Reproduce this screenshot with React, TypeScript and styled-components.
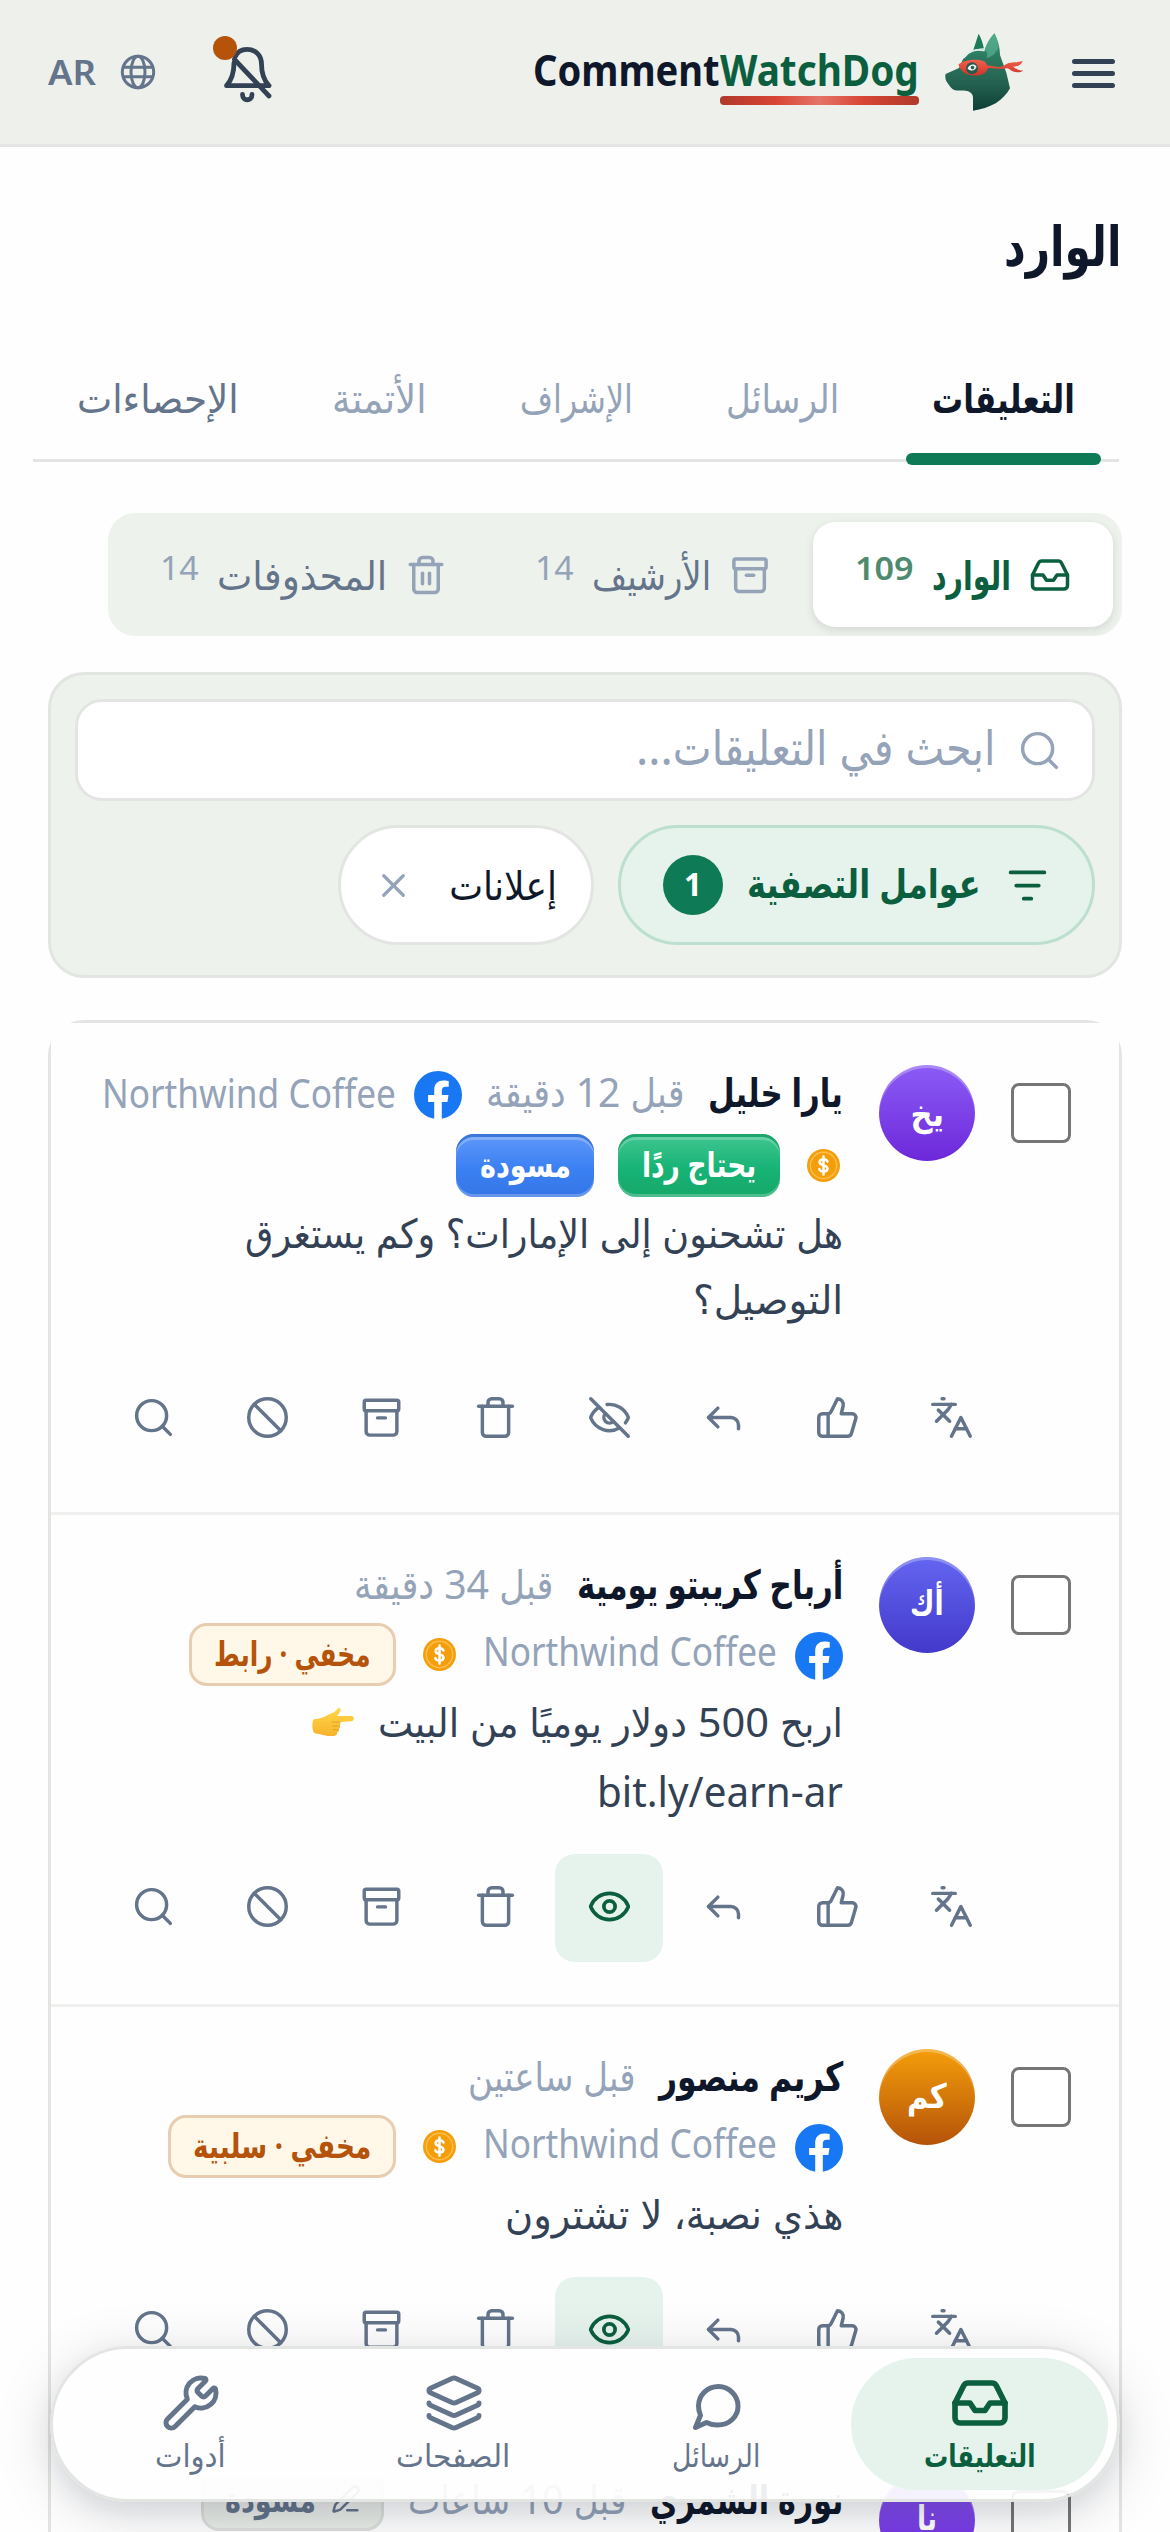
import React, { useLayoutEffect, useRef, useState } from "react";
import styled, { createGlobalStyle, css } from "styled-components";
import {
  Ban,
  Eye,
  EyeOff,
  Inbox,
  Languages,
  Layers,
  PenLine,
  Reply,
  Search,
  ThumbsUp,
  Trash,
  Trash2,
  Wrench,
  X,
} from "lucide-react";

const c = {
  ink: "#0f172a",
  body: "#334155",
  slate: "#64748b",
  mute: "#94a3b8",
  green: "#0f7b56",
  deep: "#0b5f3f",
  mint: "#e6f3ed",
  panel: "#eef2ec",
  line: "#e3e5e2",
  amber: "#b45309",
};

const Global = createGlobalStyle`
  *, *::before, *::after { box-sizing: border-box; }
  body { margin: 0; background: #fefefe; }
  svg { display: block; flex: none; }
`;

const Screen = styled.div`
  direction: rtl;
  position: relative;
  width: 1170px;
  height: 2532px;
  overflow: hidden;
  background: #fefefe;
  color: ${c.ink};
  font-family: "Noto Sans", "DejaVu Sans Condensed", "DejaVu Sans", sans-serif;
`;

/* ---------- text that fills a given measure ---------- */

const Measure = styled.span<{ $w: number; $size: number; $weight: number; $color: string; $lift: number; $ltr?: boolean; $lh: number }>`
  display: block;
  flex: none;
  width: ${(p) => p.$w}px;
  height: ${(p) => p.$lh}px;
  line-height: ${(p) => p.$lh}px;
  margin-bottom: ${(p) => p.$lift * 2}px;
  font-size: ${(p) => p.$size}px;
  font-weight: ${(p) => p.$weight};
  color: ${(p) => p.$color};
  white-space: nowrap;
  direction: ${(p) => (p.$ltr ? "ltr" : "rtl")};
`;

const Run = styled.span<{ $ltr?: boolean }>`
  display: inline-block;
  transform-origin: ${(p) => (p.$ltr ? "left" : "right")} center;
`;

type TextProps = {
  children: React.ReactNode;
  w: number;
  size?: number;
  weight?: number;
  color?: string;
  lift?: number;
  lh?: number;
  ltr?: boolean;
};

function Text({ children, w, size = 40, weight = 400, color = c.ink, lift = 0, lh = 54, ltr }: TextProps) {
  const ref = useRef<HTMLSpanElement>(null);
  const [k, setK] = useState(1);
  useLayoutEffect(() => {
    if (ref.current) setK(w / ref.current.offsetWidth);
  }, [w, size]);
  return (
    <Measure $w={w} $size={size} $weight={weight} $color={color} $lift={lift} $lh={lh} $ltr={ltr}>
      <Run ref={ref} $ltr={ltr} style={{ transform: `scaleX(${k})` }}>
        {children}
      </Run>
    </Measure>
  );
}

/* ---------- header ---------- */

const Header = styled.header`
  display: flex;
  align-items: center;
  height: 147px;
  padding: 0 48px;
  background: #edf0eb;
  border-bottom: 3px solid ${c.line};
`;

const Brand = styled.div`
  display: flex;
  align-items: center;
  gap: 26px;
  margin-right: 42px;
`;

const Wordmark = styled.div`
  display: flex;
  direction: ltr;
  align-items: flex-start;
  height: 72px;
  padding-top: 4px;
`;

const Accent = styled.div`
  display: flex;
  flex-direction: column;
`;

const Underline = styled.i`
  height: 9px;
  margin-top: -4px;
  border-radius: 4px;
  background: linear-gradient(90deg, #b0382a 0%, #d84534 28%, #e57468 50%, #d84534 72%, #b0382a 100%);
`;

const Tools = styled.div`
  display: flex;
  align-items: center;
  margin-right: auto;
`;

const Locale = styled.div`
  display: flex;
  align-items: center;
  gap: 24px;
  margin-right: 57px;
`;

const MenuIcon = () => (
  <svg width="57" height="48" viewBox="0 0 57 48" stroke={c.body} strokeWidth="5" strokeLinecap="round">
    <path d="M9.5 13.500h38M9.500 25.500h38M9.500 37.500h38" />
  </svg>
);

const DogLogo = () => (
  <svg width="78" height="78" viewBox="0 0 78 78">
    <defs>
      <linearGradient id="coat" x1="0" y1="0" x2="0" y2="1">
        <stop offset="0" stopColor="#3f9c7c" />
        <stop offset="0.3" stopColor="#2b7a60" />
        <stop offset="0.65" stopColor="#24614f" />
        <stop offset="1" stopColor="#0b3f35" />
      </linearGradient>
      <linearGradient id="band" x1="0" y1="0" x2="0" y2="1">
        <stop offset="0" stopColor="#f0604d" />
        <stop offset="1" stopColor="#cf3527" />
      </linearGradient>
    </defs>
    <path d="M33.600 .7 28 18c3-1.800 7-2.800 10.800-2.700C38 10 36 5 33.600.7z" fill="#1d7a58" />
    <path
      d="M49.400.3C45 5 41.500 11 39.600 17c-8-1.500-17 1.500-21 8.300-2 3.500-3 7-4.600 9.700L.6 41c-.8 3 0 6 1.600 8.400 2 2.600 4 6.600 8 7.900 4 1 9-.8 13 .9 3.500 1.500 4.800 3.500 4.800 6.500v13c8-1.200 16-3.700 22.700-7.400C57 66 62 61 65 55.300L61.400 40 55 22C55 14 52.500 6 49.400.3z"
      fill="url(#coat)"
    />
    <path d="M49.400.3C45 5 41.500 11 39.600 17c3 2 3 4 2 8 5-1 10-5 12-11C52.700 9 51.500 4 49.400.3z" fill="#5bb394" opacity=".65" />
    <path d="M19 24.500c4-6 12-9 20-7" fill="none" stroke="#dff2ea" strokeWidth="1.600" strokeLinecap="round" />
    <path
      d="M13.400 31.500c5-4.500 17-6 25-3.500 2 .8 3 2.600 4 4.500l11.600 1.500c2-.8 4-.3 5-1.200 5-5 11-2.500 18.700-4.800-1 3.500-5 6-10 5.600 3 2 6 4 10.500 3.900-4 3-10 2-14-1.500-1.500-1.300-4-1-6 0L43 35c-1.500 5-6 7.600-12.500 7.600C23 42.600 16 40 13.400 31.500z"
      fill="url(#band)"
    />
    <circle cx="27" cy="35.300" r="6" fill="#2a5a4c" />
    <path d="M22.500 35.500c2-4.500 7-5 9-2-.5 3.500-5 6-9 2z" fill="#f4faf7" />
    <circle cx="27.500" cy="34.600" r="1.800" fill="#2a5a4c" />
  </svg>
);

const BellIcon = () => (
  <svg width="60" height="78" viewBox="213 33 60 78" fill="none" strokeLinecap="round" strokeLinejoin="round">
    <g stroke={c.body} strokeWidth="4.800">
      <path d="M235 57c2-4.800 6.500-7.700 12-7.700 9 0 14.500 6.500 14.500 14.700 0 10 2.500 16.500 7.500 21.700h-42.500c5-5.500 7.500-13 7.500-22.700" />
      <path d="M234.500 59.500 269 96" />
      <path d="M242.500 94.500c0 7 9.500 7 9.500 0" />
    </g>
    <circle cx="225" cy="48" r="12" fill={c.amber} />
  </svg>
);

const GlobeIcon = () => (
  <svg width="36" height="36" viewBox="0 0 36 36" fill="none" stroke="#64748b" strokeWidth="3">
    <circle cx="18" cy="18" r="15.700" />
    <ellipse cx="18" cy="18" rx="7" ry="15.700" />
    <path d="M3.500 13.300h29M3.500 22.700h29" />
  </svg>
);

/* ---------- title and tabs ---------- */

const TitleRow = styled.div`
  display: flex;
  height: 176px;
  padding: 58px 49px 0;
`;

const Tabs = styled.nav`
  display: flex;
  height: 139px;
  margin: 0 51px 0 33px;
  padding: 48px 18px 0 0;
  border-bottom: 3px solid ${c.line};
`;

const Tab = styled.div<{ $active?: boolean }>`
  display: flex;
  flex: none;
  flex-direction: column;
  align-items: stretch;
  height: 94px;
  padding: 0 26px;
  margin-left: 41px;
  &:last-child {
    margin-left: 0;
  }
  ${(p) =>
    p.$active &&
    css`
      &::after {
        content: "";
        flex: none;
        height: 12px;
        margin: 28px -26px 0;
        border-radius: 6px;
        background: ${c.green};
      }
    `}
`;

/* ---------- folder switch ---------- */

const Folders = styled.div`
  display: flex;
  width: 1014px;
  height: 123px;
  margin: 51px 48px 0 0;
  padding: 9px;
  border-radius: 27px;
  background: ${c.panel};
`;

const Folder = styled.div<{ $w: number; $pr: number; $active?: boolean }>`
  display: flex;
  flex: none;
  align-items: center;
  gap: 18px;
  width: ${(p) => p.$w}px;
  padding-right: ${(p) => p.$pr}px;
  border-radius: 22px;
  ${(p) =>
    p.$active &&
    css`
      background: #fff;
      box-shadow: 0 3px 8px rgba(15, 23, 42, 0.12);
    `}
`;

const ArchiveIcon = ({ size, sw = 1.85 }: { size: number; sw?: number }) => (
  <svg width={size} height={size} viewBox="0 0 24 24" fill="none" stroke="currentColor" strokeWidth={sw} strokeLinecap="round" strokeLinejoin="round">
    <rect x="2.800" y="2.800" width="18.400" height="5.600" rx="1" />
    <path d="M3.800 8.400v11a2 2 0 0 0 2 2h12.400a2 2 0 0 0 2-2v-11" />
    <path d="M9.900 12.200h4.200" />
  </svg>
);

const Tint = styled.span<{ $c: string }>`
  display: flex;
  color: ${(p) => p.$c};
`;

/* ---------- filter panel ---------- */

const Filters = styled.section`
  display: flex;
  flex-direction: column;
  gap: 24px;
  height: 306px;
  margin: 36px 48px 0;
  padding: 24px;
  border: 3px solid ${c.line};
  border-radius: 36px;
  background: #edf2ec;
`;

const SearchField = styled.div`
  display: flex;
  align-items: center;
  gap: 22px;
  height: 102px;
  padding-right: 30px;
  border: 3px solid ${c.line};
  border-radius: 27px;
  background: #fff;
`;

const Chips = styled.div`
  display: flex;
  gap: 24px;
`;

const Chip = styled.div<{ $w: number; $pr: number; $gap: number; $active?: boolean }>`
  display: flex;
  flex: none;
  align-items: center;
  gap: ${(p) => p.$gap}px;
  width: ${(p) => p.$w}px;
  height: 120px;
  padding-right: ${(p) => p.$pr}px;
  border: 3px solid ${(p) => (p.$active ? "#bcdfd0" : c.line)};
  border-radius: 60px;
  background: ${(p) => (p.$active ? c.mint : "#fff")};
`;

const Count = styled.span`
  display: flex;
  align-items: center;
  justify-content: center;
  width: 60px;
  height: 60px;
  border-radius: 50%;
  background: ${c.green};
`;

const FilterIcon = () => (
  <svg width="45" height="45" viewBox="0 0 24 24" stroke={c.deep} strokeWidth="2" strokeLinecap="round">
    <path d="M3 5h18M6 12h12M10 19h4" />
  </svg>
);

/* ---------- comment list ---------- */

const List = styled.section`
  margin: 42px 48px 0;
  border: 3px solid ${c.line};
  border-radius: 36px 36px 0 0;
`;

const Item = styled.article<{ $h: number }>`
  height: ${(p) => p.$h}px;
  padding: 42px 48px 0;
  border-bottom: 3px solid #efefed;
  background: #fefefe;
`;

const Head = styled.div`
  display: flex;
  gap: 36px;
`;

const Checkbox = styled.span`
  flex: none;
  width: 60px;
  height: 60px;
  margin-top: 18px;
  border: 3px solid #767676;
  border-radius: 8px;
  background: #fff;
`;

const Avatar = styled.span<{ $from: string; $to: string }>`
  display: flex;
  flex: none;
  align-items: center;
  justify-content: center;
  width: 96px;
  height: 96px;
  border-radius: 50%;
  background: linear-gradient(${(p) => p.$from}, ${(p) => p.$to});
  box-shadow: inset 0 3px 0 rgba(255, 255, 255, 0.28);
`;

const Content = styled.div`
  flex: 1;
  min-width: 0;
`;

const Meta = styled.div<{ $h: number; $mt?: number }>`
  display: flex;
  align-items: center;
  gap: 24px;
  height: ${(p) => p.$h}px;
  margin-top: ${(p) => p.$mt ?? 0}px;
`;

const Source = styled.div`
  display: flex;
  align-items: center;
  gap: 18px;
`;

const FbBox = styled.span<{ $drop: number }>`
  margin-top: ${(p) => p.$drop}px;
`;

const CoinBox = styled.span`
  padding: 0 3px;
`;

const pillTone = {
  green: css`
    background: linear-gradient(#41c78f, #17b376 55%, #16a869);
    box-shadow: inset 0 3px 0 #1ea56c, inset 0 6px 0 rgba(255, 255, 255, 0.22), inset 0 -3px 0 rgba(255, 255, 255, 0.24);
  `,
  blue: css`
    background: linear-gradient(#6098fa, #3b80f3 55%, #3576e6);
    box-shadow: inset 0 3px 0 #3b76d8, inset 0 6px 0 rgba(255, 255, 255, 0.25), inset 0 -3px 0 rgba(255, 255, 255, 0.24);
  `,
  warn: css`
    background: #fff7e8;
    border: 3px solid #e9cdb0;
  `,
  plain: css`
    background: #e9ece7;
    border: 3px solid #dcdfda;
  `,
};

const Pill = styled.span<{ $tone: keyof typeof pillTone; $w: number }>`
  display: flex;
  flex: none;
  align-items: center;
  justify-content: center;
  gap: 15px;
  width: ${(p) => p.$w}px;
  height: 63px;
  border-radius: 18px;
  ${(p) => pillTone[p.$tone]}
`;

const Body = styled.div`
  display: flex;
  flex-direction: column;
`;

const BodyLine = styled.div<{ $h: number }>`
  display: flex;
  align-items: flex-start;
  gap: 24px;
  height: ${(p) => p.$h}px;
`;

const EmojiBox = styled.span`
  padding-top: 21px;
`;

const Actions = styled.div<{ $mt: number }>`
  display: flex;
  justify-content: flex-end;
  gap: 6px;
  margin-top: ${(p) => p.$mt}px;
`;

const Action = styled.span<{ $on?: boolean }>`
  display: flex;
  align-items: center;
  justify-content: center;
  width: 108px;
  height: 108px;
  padding-bottom: 3px;
  border-radius: 20px;
  color: ${(p) => (p.$on ? c.deep : c.slate)};
  background: ${(p) => (p.$on ? c.mint : "transparent")};
`;

const Facebook = ({ drop = 3 }: { drop?: number }) => (
  <FbBox $drop={drop}>
    <svg width="48" height="48" viewBox="0 0 24 24">
      <circle cx="12" cy="12" r="12" fill="#1877f2" />
      <path
        d="M10.100 24v-8.500H7.050V12h3.050V9.400c0-3 1.800-4.700 4.550-4.700 1.300 0 2.700.25 2.700.25v2.900h-1.500c-1.500 0-1.950.95-1.950 1.900V12h3.350l-.55 3.500h-2.800V24z"
        fill="#fff"
      />
    </svg>
  </FbBox>
);

const Coin = () => (
  <CoinBox>
    <svg width="33" height="33" viewBox="0 0 33 33" fill="none">
      <circle cx="16.500" cy="16.500" r="16.500" fill="#f59e0b" />
      <circle cx="16.500" cy="16.500" r="13.200" stroke="#fbbf4f" strokeWidth="1.400" />
      <path d="M20.500 12.500c-.7-1.600-2.200-2.300-4-2.300-2.200 0-3.900 1.100-3.900 2.900 0 4.300 7.900 2.200 7.900 6.500 0 1.900-1.800 3-4 3-2 0-3.600-.8-4.200-2.500M16.500 7.500v18" stroke="#fff" strokeWidth="2.500" strokeLinecap="round" />
    </svg>
  </CoinBox>
);

const PointRight = () => (
  <EmojiBox>
    <svg width="42" height="30" viewBox="0 0 42 30">
      <defs>
        <linearGradient id="skin" x1="0" y1="0" x2="0" y2="1">
          <stop offset="0" stopColor="#ffd84a" />
          <stop offset="1" stopColor="#f7b32b" />
        </linearGradient>
      </defs>
      <path
        d="M1 13c1.500-1.200 4-1 6-1.500C13 10 17 7 21.500 5.500c2-.8 3.500-3.500 5-4.400 1.500-.8 3 .8 2 2.700-.9 1.800-2 3.700-3.500 5.200h14.500c3 0 3 5.200 0 5.200L28 15c1 1.500.6 3-.5 3.700.8 1.300.4 2.700-.8 3.400.5 1.500 0 2.800-1.400 3.300C25 28 23 29 21 29c-6 0-8 0-12-1.500-2-.7-5-.5-7-1.500-2-3.500-2-9-1-13z"
        fill="url(#skin)"
      />
      <path d="M20 15h8M21 19h6.500M21 22.700h5.500" stroke="#e3a024" strokeWidth="1" strokeLinecap="round" fill="none" />
    </svg>
  </EmojiBox>
);

const iconProps = { size: 45, strokeWidth: 1.85 };

function ActionBar({ mt, hidden }: { mt: number; hidden?: boolean }) {
  return (
    <Actions $mt={mt}>
      <Action><Languages {...iconProps} /></Action>
      <Action><ThumbsUp {...iconProps} /></Action>
      <Action><Reply {...iconProps} /></Action>
      <Action $on={hidden}>{hidden ? <Eye {...iconProps} strokeWidth={2} /> : <EyeOff {...iconProps} />}</Action>
      <Action><Trash {...iconProps} /></Action>
      <Action><ArchiveIcon size={45} /></Action>
      <Action><Ban {...iconProps} /></Action>
      <Action><Search {...iconProps} /></Action>
    </Actions>
  );
}

const PageName = ({ lift = 0 }: { lift?: number }) => (
  <Text w={294} size={40} color={c.mute} ltr lift={lift}>
    Northwind Coffee
  </Text>
);

/* ---------- bottom navigation ---------- */

const Dock = styled.nav`
  position: absolute;
  left: 50px;
  top: 2346px;
  display: grid;
  grid-template-columns: repeat(4, 1fr);
  gap: 6px;
  width: 1070px;
  height: 156px;
  padding: 9px;
  border: 3px solid ${c.line};
  border-radius: 78px;
  background: linear-gradient(#fefefe 84%, rgba(254, 254, 254, 0.93) 88%);
  background-clip: padding-box;
  box-shadow: 0 12px 60px rgba(15, 23, 42, 0.14), 0 10px 24px rgba(15, 23, 42, 0.08);
`;

const DockItem = styled.div<{ $active?: boolean }>`
  display: flex;
  flex-direction: column;
  align-items: center;
  padding-top: 15px;
  border-radius: 66px;
  color: ${(p) => (p.$active ? c.deep : c.slate)};
  background: ${(p) => (p.$active ? c.mint : "transparent")};
`;

const BubbleIcon = () => (
  <svg width="60" height="60" viewBox="0 0 60 60" fill="none" stroke="currentColor" strokeWidth="5" strokeLinejoin="round">
    <path d="M19.500 49.500c3.500 1.800 7 2.500 11 2.500 12 0 20.500-8.500 20.500-18.800S42.500 13.500 31.500 13.500 11.500 22 11.500 33c0 4 .8 6.700 2 9.300L8.500 54.500z" />
  </svg>
);

export default function App() {
  return (
    <Screen>
      <Global />
      <Header>
        <MenuIcon />
        <Brand>
          <DogLogo />
          <Wordmark>
            <Text w={187} size={43} weight={700} ltr lh={60}>Comment</Text>
            <Accent>
              <Text w={199} size={43} weight={700} color={c.deep} ltr lh={60}>WatchDog</Text>
              <Underline />
            </Accent>
          </Wordmark>
        </Brand>
        <Tools>
          <BellIcon />
          <Locale>
            <GlobeIcon />
            <Text w={48} size={35} weight={600} color={c.slate} ltr>AR</Text>
          </Locale>
        </Tools>
      </Header>

      <TitleRow>
        <Text w={117} size={55} weight={700} lh={80}>الوارد</Text>
      </TitleRow>

      <Tabs>
        <Tab $active><Text w={143} weight={700}>التعليقات</Text></Tab>
        <Tab><Text w={113} color={c.mute}>الرسائل</Text></Tab>
        <Tab><Text w={113} color={c.mute}>الإشراف</Text></Tab>
        <Tab><Text w={95} color={c.mute}>الأتمتة</Text></Tab>
        <Tab><Text w={162} color={c.slate}>الإحصاءات</Text></Tab>
      </Tabs>

      <Folders>
        <Folder $w={300} $pr={42} $active>
          <Tint $c={c.deep}><Inbox size={42} strokeWidth={2} /></Tint>
          <Text w={79} weight={700} color={c.deep}>الوارد</Text>
          <Text w={59} size={33} weight={600} color="#4d8a6e" ltr lift={7}>109</Text>
        </Folder>
        <Folder $w={324} $pr={42}>
          <Tint $c={c.mute}><ArchiveIcon size={42} sw={2} /></Tint>
          <Text w={119} color={c.slate}>الأرشيف</Text>
          <Text w={39} size={33} color={c.mute} ltr lift={7}>14</Text>
        </Folder>
        <Folder $w={360} $pr={42}>
          <Tint $c={c.mute}><Trash2 size={42} strokeWidth={2} /></Tint>
          <Text w={170} color={c.slate}>المحذوفات</Text>
          <Text w={39} size={33} color={c.mute} ltr lift={7}>14</Text>
        </Folder>
      </Folders>

      <Filters>
        <SearchField>
          <Tint $c={c.mute}><Search size={45} strokeWidth={1.85} /></Tint>
          <Text w={360} size={48} color={c.mute} lh={70} lift={3}>ابحث في التعليقات...</Text>
        </SearchField>
        <Chips>
          <Chip $w={477} $pr={42} $gap={24} $active>
            <FilterIcon />
            <Text w={234} weight={700} color={c.deep} lift={2}>عوامل التصفية</Text>
            <Count><Text w={18} size={33} weight={700} color="#fff" lift={1} ltr>1</Text></Count>
          </Chip>
          <Chip $w={256} $pr={34} $gap={36}>
            <Text w={108}>إعلانات</Text>
            <Tint $c={c.mute}><X size={39} strokeWidth={2} /></Tint>
          </Chip>
        </Chips>
      </Filters>

      <List>
        <Item $h={492}>
          <Head>
            <Checkbox />
            <Avatar $from="#8b5cf6" $to="#6d28d9"><Text w={34} size={34} weight={700} color="#fff">يخ</Text></Avatar>
            <Content>
              <Meta $h={54}>
                <Text w={135} weight={700}>يارا خليل</Text>
                <Text w={198} color={c.mute}>قبل 12 دقيقة</Text>
                <Source><Facebook drop={6} /><PageName lift={-1} /></Source>
              </Meta>
              <Meta $h={63} $mt={15}>
                <Coin />
                <Pill $tone="green" $w={162}><Text w={114} size={34} weight={700} color="#fff" lift={2}>يحتاج ردًا</Text></Pill>
                <Pill $tone="blue" $w={138}><Text w={91} size={34} weight={700} color="#fff" lift={2}>مسودة</Text></Pill>
              </Meta>
              <Body>
                <BodyLine $h={66}><Text w={598} color={c.body} lh={72}>هل تشحنون إلى الإمارات؟ وكم يستغرق</Text></BodyLine>
                <BodyLine $h={66}><Text w={150} color={c.body} lh={72}>التوصيل؟</Text></BodyLine>
              </Body>
            </Content>
          </Head>
          <ActionBar mt={36} />
        </Item>

        <Item $h={492}>
          <Head>
            <Checkbox />
            <Avatar $from="#6366f1" $to="#4338ca"><Text w={34} size={34} weight={700} color="#fff" lift={3}>أك</Text></Avatar>
            <Content>
              <Meta $h={54}>
                <Text w={266} weight={700}>أرباح كريبتو يومية</Text>
                <Text w={199} color={c.mute}>قبل 34 دقيقة</Text>
              </Meta>
              <Meta $h={63} $mt={12}>
                <Source><Facebook /><PageName lift={4} /></Source>
                <Coin />
                <Pill $tone="warn" $w={207}><Text w={157} size={34} weight={700} color={c.amber} lift={2}>مخفي · رابط</Text></Pill>
              </Meta>
              <Body>
                <BodyLine $h={69}>
                  <Text w={465} color={c.body} lh={72}>اربح 500 دولار يوميًا من البيت</Text>
                  <PointRight />
                </BodyLine>
                <BodyLine $h={66}><Text w={246} size={42} color={c.body} lh={72} ltr>bit.ly/earn-ar</Text></BodyLine>
              </Body>
            </Content>
          </Head>
          <ActionBar mt={33} hidden />
        </Item>

        <Item $h={423}>
          <Head>
            <Checkbox />
            <Avatar $from="#f59e0b" $to="#b45309"><Text w={40} size={34} weight={700} color="#fff" lift={2}>كم</Text></Avatar>
            <Content>
              <Meta $h={54}>
                <Text w={184} weight={700}>كريم منصور</Text>
                <Text w={167} color={c.mute}>قبل ساعتين</Text>
              </Meta>
              <Meta $h={63} $mt={12}>
                <Source><Facebook /><PageName lift={4} /></Source>
                <Coin />
                <Pill $tone="warn" $w={228}><Text w={178} size={34} weight={700} color={c.amber} lift={2}>مخفي · سلبية</Text></Pill>
              </Meta>
              <Body>
                <BodyLine $h={66}><Text w={338} color={c.body} lh={72}>هذي نصبة، لا تشترون</Text></BodyLine>
              </Body>
            </Content>
          </Head>
          <ActionBar mt={33} hidden />
        </Item>

        <Item $h={492}>
          <Head>
            <Checkbox />
            <Avatar $from="#8b5cf6" $to="#6d28d9"><Text w={20} size={34} weight={700} color="#fff" lift={3}>نا</Text></Avatar>
            <Content>
              <Meta $h={54}>
                <Text w={193} weight={700}>نورة الشمري</Text>
                <Text w={218} color={c.mute}>قبل 10 ساعات</Text>
                <Pill $tone="plain" $w={183}>
                  <Tint $c={c.slate}><PenLine size={30} /></Tint>
                  <Text w={91} size={34} weight={700} color={c.slate}>مسودة</Text>
                </Pill>
              </Meta>
            </Content>
          </Head>
        </Item>
      </List>

      <Dock>
        <DockItem $active>
          <Inbox size={60} strokeWidth={2.25} />
          <Text w={112} size={31} weight={700} color={c.deep} lh={45}>التعليقات</Text>
        </DockItem>
        <DockItem>
          <BubbleIcon />
          <Text w={88} size={31} color={c.slate} lh={45}>الرسائل</Text>
        </DockItem>
        <DockItem>
          <Layers size={60} strokeWidth={2} />
          <Text w={114} size={31} color={c.slate} lh={45}>الصفحات</Text>
        </DockItem>
        <DockItem>
          <Wrench size={60} strokeWidth={2} />
          <Text w={71} size={31} color={c.slate} lh={45}>أدوات</Text>
        </DockItem>
      </Dock>
    </Screen>
  );
}
